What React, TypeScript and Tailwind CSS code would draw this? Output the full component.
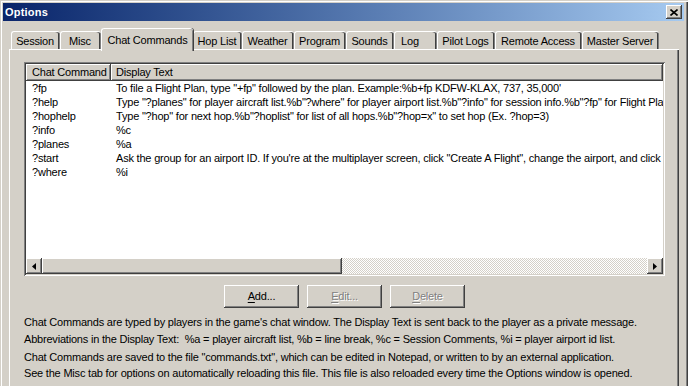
import React from 'react';

const raised =
  'shadow-[inset_-1px_-1px_#404040,inset_1px_1px_#ffffff,inset_-2px_-2px_#808080,inset_2px_2px_#d4d0c8]';
const headerCell = 'shadow-[inset_-1px_-1px_#404040,inset_1px_1px_#ffffff,inset_-2px_-2px_#808080]';

const tabs = [
  { label: 'Session', w: 'w-[49px]' },
  { label: 'Misc', w: 'w-[41px]' },
  { label: 'Chat Commands', w: 'w-[92px]', active: true },
  { label: 'Hop List', w: 'w-[49px]' },
  { label: 'Weather', w: 'w-[52px]' },
  { label: 'Program', w: 'w-[52px]' },
  { label: 'Sounds', w: 'w-[48px]' },
  { label: 'Log', w: 'w-[43px]', pad: 'pr-[12px]' },
  { label: 'Pilot Logs', w: 'w-[58px]' },
  { label: 'Remote Access', w: 'w-[87px]' },
  { label: 'Master Server', w: 'w-[77px]' },
];

const commands = [
  ['?fp', 'To file a Flight Plan, type "+fp" followed by the plan. Example:%b+fp KDFW-KLAX, 737, 35,000\''],
  [
    '?help',
    'Type "?planes" for player aircraft list.%b"?where" for player airport list.%b"?info" for session info.%b"?fp" for Flight Plan help.',
  ],
  ['?hophelp', 'Type "?hop" for next hop.%b"?hoplist" for list of all hops.%b"?hop=x" to set hop (Ex. ?hop=3)'],
  ['?info', '%c'],
  ['?planes', '%a'],
  [
    '?start',
    'Ask the group for an airport ID. If you\'re at the multiplayer screen, click "Create A Flight", change the airport, and click OK.',
  ],
  ['?where', '%i'],
];

function Arrow({ dir }: { dir: 'left' | 'right' }) {
  return (
    <svg width="4" height="7" viewBox="0 0 4 7">
      {dir === 'left' ? <path d="M4 0 L0 3.5 L4 7 Z" fill="#000" /> : <path d="M0 0 L4 3.5 L0 7 Z" fill="#000" />}
    </svg>
  );
}

function Button({ label, hot, disabled }: { label: string; hot: string; disabled?: boolean }) {
  const rest = label.slice(1);
  return (
    <div
      className={`w-[75px] h-[23px] flex items-center justify-center ${raised} ${
        disabled ? 'text-[#808080] [text-shadow:1px_1px_0_#ffffff]' : 'text-black'
      }`}
    >
      <span>
        <span className="underline underline-offset-2">{hot}</span>
        {rest}
      </span>
    </div>
  );
}

export default function App() {
  return (
    <div className="w-[688px] h-[386px] overflow-hidden bg-[#d4d0c8] text-[11px] tracking-[-0.2px] text-black font-['Liberation_Sans',Arial,sans-serif]">
      <div className="h-[400px] pt-[3px] pl-[3px] pr-[4px] shadow-[inset_1px_1px_#d4d0c8,inset_2px_2px_#ffffff,inset_-1px_-1px_#404040,inset_-2px_-2px_#808080]">
        {/* Title bar */}
        <div className="h-[18px] flex items-center justify-between pl-[2px] pr-[2px] bg-gradient-to-r from-[#0a246a] to-[#a6caf0]">
          <span className="text-white font-bold text-[11px] tracking-[0.2px]">Options</span>
          <div className={`w-[16px] h-[14px] bg-[#d4d0c8] flex items-center justify-center ${raised}`}>
            <svg width="8" height="7" viewBox="0 0 8 7">
              <path d="M0.5 0.5 L7.5 6.5 M7.5 0.5 L0.5 6.5" stroke="#000" strokeWidth="1.6" />
            </svg>
          </div>
        </div>

        {/* Tabs */}
        <div className="pt-[7px] pl-[6px]">
          <div className="flex items-start h-[21px] pl-[2px]">
            {tabs.map((t) =>
              t.active ? (
                <div
                  key={t.label}
                  className={`${t.w} h-[23px] relative z-10 bg-[#d4d0c8] rounded-t-[3px] border-t border-l border-white shadow-[inset_-1px_0_#808080,1px_0_#404040] flex justify-center pt-[3px]`}
                >
                  {t.label}
                </div>
              ) : (
                <div
                  key={t.label}
                  className={`${t.w} h-[18px] mt-[3px] rounded-t-[3px] border-t border-l border-white shadow-[inset_-1px_0_#808080,inset_-2px_0_#404040] flex justify-center items-center ${
                    t.pad ?? 'pr-[2px]'
                  } pt-[1px]`}
                >
                  {t.label}
                </div>
              ),
            )}
          </div>

          {/* Tab panel */}
          <div className="w-[670px] h-[360px] pt-[13px] pl-[15px] shadow-[inset_1px_1px_#ffffff,inset_-1px_0_#404040,inset_-2px_0_#808080]">
            {/* List view */}
            <div className="w-[641px] h-[214px] p-[2px] bg-white shadow-[inset_1px_1px_#808080,inset_-1px_-1px_#ffffff,inset_2px_2px_#404040,inset_-2px_-2px_#d4d0c8] flex flex-col">
              <div className="h-[17px] flex bg-[#d4d0c8]">
                <div className={`w-[85px] h-full flex items-center pl-[6px] ${headerCell}`}>Chat Command</div>
                <div className={`flex-1 h-full flex items-center pl-[5px] ${headerCell}`}>Display Text</div>
              </div>
              <div className="flex-1 overflow-hidden">
                {commands.map(([cmd, text]) => (
                  <div key={cmd} className="h-[14px] flex items-center whitespace-nowrap">
                    <div className="w-[85px] shrink-0 pl-[6px]">{cmd}</div>
                    <div className="pl-[5px]">{text}</div>
                  </div>
                ))}
              </div>
              {/* Horizontal scrollbar */}
              <div className="h-[16px] flex">
                <div className={`w-[16px] h-full bg-[#d4d0c8] flex items-center justify-center ${raised}`}>
                  <Arrow dir="left" />
                </div>
                <div className={`w-[300px] h-full bg-[#d4d0c8] ${raised}`} />
                <div className="flex-1 h-full [background-image:repeating-conic-gradient(#ffffff_0%_25%,#d4d0c8_0%_50%)] [background-size:2px_2px]" />
                <div className={`w-[16px] h-full bg-[#d4d0c8] flex items-center justify-center ${raised}`}>
                  <Arrow dir="right" />
                </div>
              </div>
            </div>

            {/* Buttons */}
            <div className="w-[641px] flex justify-center gap-[8px] mt-[9px]">
              <Button label="Add..." hot="A" />
              <Button label="Edit..." hot="E" disabled />
              <Button label="Delete" hot="D" disabled />
            </div>

            {/* Help text */}
            <div className="leading-[13px]">
              <p className="mt-[8px]">
                Chat Commands are typed by players in the game's chat window. The Display Text is sent back to the player as
                a private message.
              </p>
              <p className="mt-[4px]">
                Abbreviations in the Display Text:&nbsp; %a = player aircraft list, %b = line break, %c = Session Comments, %i
                = player airport id list.
              </p>
              <p className="mt-[5px]">
                Chat Commands are saved to the file "commands.txt", which can be edited in Notepad, or written to by an
                external application.
              </p>
              <p className="mt-[3px]">
                See the Misc tab for options on automatically reloading this file. This file is also reloaded every time the
                Options window is opened.
              </p>
            </div>
          </div>
        </div>
      </div>
    </div>
  );
}
